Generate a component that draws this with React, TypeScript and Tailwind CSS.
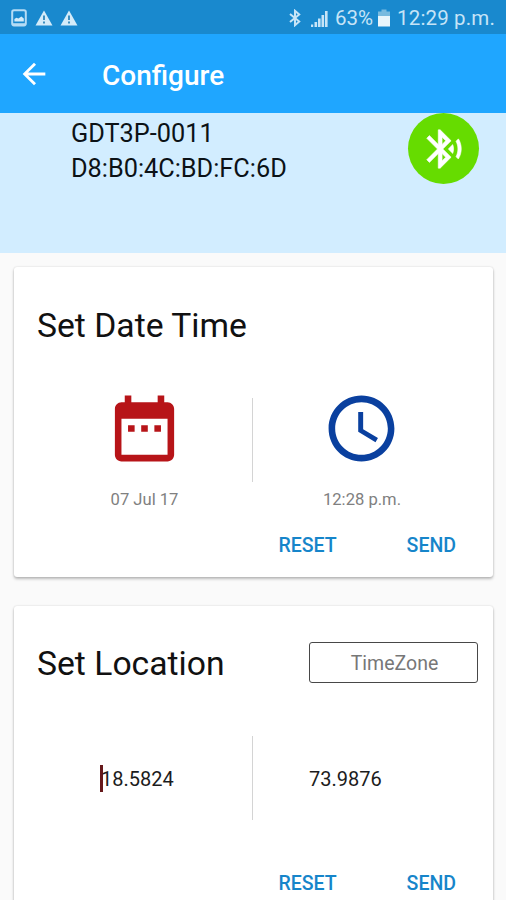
import * as React from "react"

interface CardActionsProps {
  className?: string
}

function WarningIcon() {
  return (
    <svg viewBox="0 0 18 16" className="w-[18px] h-4 shrink-0">
      <path d="M9 0.5 17.5 15.5H0.5z" fill="#d3ebf9" />
      <path d="M8 5.5h2v4.6H8zM8 11.4h2v2H8z" fill="#3c8fc0" />
    </svg>
  )
}

function StatusBar() {
  return (
    <div className="flex items-center h-[34px] bg-[#1989ce] pl-[11px] pr-[11px] text-[#c6e4f7]">
      <svg viewBox="0 0 16 18" className="w-4 h-[18px] mt-px shrink-0">
        <rect x="1.2" y="1.2" width="13.6" height="15.2" rx="1.8" fill="none" stroke="#b5dcf5" strokeWidth="2" />
        <path d="M3.4 12.5V10l2-1.2 2 .8 3-2 2.4 2v2.9z" fill="#d3ebf9" />
        <path d="M2 14.2h12v2H2z" fill="#b5dcf5" />
      </svg>
      <div className="flex gap-[7px] ml-2 mt-px">
        <WarningIcon />
        <WarningIcon />
      </div>
      <div className="flex items-center ml-auto">
        <svg viewBox="0 0 12 18" className="w-3 h-[18px] mt-px shrink-0">
          <path d="M1 5l9.2 7.6L6 16.2V1.8l4.2 3.6L1 13" fill="none" stroke="currentColor" strokeWidth="2" />
        </svg>
        <svg viewBox="0 0 17 17" className="w-[17px] h-[17px] ml-[10px] mt-[2px] shrink-0" fill="currentColor">
          <path d="M0 14.5h2.2V17H0zM3.5 12h2.6v5H3.5zM7 8.5h2.6V17H7zM10.5 5h2.6v12h-2.6zM14 1h2.6v16H14z" />
        </svg>
        <span className="ml-[7px] mt-px w-[39px] text-[20.500px] leading-6 whitespace-nowrap">63%</span>
        <svg viewBox="0 0 12 18" className="w-3 h-[18px] ml-[4px] mt-px shrink-0">
          <path d="M3.5 0.5h5v2H12V8H0V2.500h3.500z" fill="#78badf" />
          <path d="M0 7h12v10.500H0z" fill="#e8f5fc" />
        </svg>
        <span className="ml-[7px] mt-px text-[20.5px] leading-6 whitespace-nowrap tracking-[0.150px]">12:29 p.m.</span>
      </div>
    </div>
  )
}

function AppBar() {
  return (
    <header className="flex items-center h-[79px] bg-[#1fa6ff] text-white">
      <button className="ml-[17px]" aria-label="Back">
        <svg viewBox="0 0 24 24" className="w-[34px] h-[34px]" fill="currentColor">
          <path d="M20 11H7.830l5.590-5.590L12 4l-8 8 8 8 1.410-1.410L7.830 13H20v-2z" />
        </svg>
      </button>
      <h1 className="ml-[51px] mt-[4px] text-[28px] leading-8 font-medium">Configure</h1>
    </header>
  )
}

function DeviceInfo() {
  return (
    <section className="flex justify-between h-[140px] bg-[#d2edff] pl-[71px] pr-[27px]">
      <div className="pt-[4px] text-[25.3px] leading-[34.500px] text-[#0c1216]">
        <p>GDT3P-0011</p>
        <p>D8:B0:4C:BD:FC:6D</p>
      </div>
      <div className="flex items-center justify-center w-[71px] h-[71px] rounded-full bg-[#66dc00]">
        <svg viewBox="0 0 24 24" className="w-[46px] h-[46px] mt-px" fill="#fff" stroke="#fff" strokeWidth="0.3">
          <path d="M14.240 12.010l2.320 2.320c.28-.72.44-1.510.44-2.330 0-.82-.16-1.590-.43-2.310l-2.330 2.320zm5.290-5.300l-1.260 1.260c.63 1.210.98 2.570.98 4.020s-.36 2.820-.98 4.020l1.200 1.200c.97-1.540 1.540-3.360 1.540-5.310-.01-1.890-.55-3.670-1.480-5.190zm-3.820 1L10 2H9v7.590L4.410 5 3 6.410 8.590 12 3 17.590 4.410 19 9 14.410V22h1l5.710-5.710-4.300-4.290 4.300-4.290zM11 5.830l1.880 1.880L11 9.590V5.830zm1.880 10.460L11 18.170v-3.760l1.880 1.880z" />
        </svg>
      </div>
    </section>
  )
}

function CardActions({ className = "" }: CardActionsProps) {
  return (
    <div className={`flex justify-end gap-[70px] pr-[37px] text-[19.500px] leading-6 font-medium text-[#1685ca] ${className}`}>
      <button>RESET</button>
      <button>SEND</button>
    </div>
  )
}

function Divider() {
  return <div className="w-px h-[84px] bg-[#d4d4d4] shrink-0" />
}

function DateTimeCard() {
  return (
    <section className="h-[310px] rounded-[3px] bg-white shadow-[0_2px_3px_rgba(0,0,0,0.25),0_0_2px_rgba(0,0,0,0.15)] pt-[39px]">
      <h2 className="pl-[23px] text-[33.700px] leading-10 text-[#111]">Set Date Time</h2>
      <div className="flex pl-[23px] mt-[43px] h-[122px] text-[16.600px] leading-5 text-[#808080]">
        <div className="flex flex-col items-center w-[215px]">
          <svg viewBox="0 0 24 24" className="w-[79px] h-[79px]" fill="#b71418">
            <path d="M9 11H7v2h2v-2zm4 0h-2v2h2v-2zm4 0h-2v2h2v-2zm2-7h-1V2h-2v2H8V2H6v2H5c-1.110 0-1.990.9-1.990 2L3 20c0 1.100.89 2 2 2h14c1.100 0 2-.9 2-2V6c0-1.100-.9-2-2-2zm0 16H5V9h14v11z" />
          </svg>
          <p className="mt-[22px]">07 Jul 17</p>
        </div>
        <div className="mt-[9px]">
          <Divider />
        </div>
        <div className="flex flex-col items-center w-[217px]">
          <svg viewBox="0 0 24 24" className="w-[79px] h-[79px]" fill="#0a409f">
            <path d="M11.990 2C6.470 2 2 6.480 2 12s4.470 10 9.990 10C17.520 22 22 17.520 22 12S17.520 2 11.990 2zM12 20c-4.420 0-8-3.580-8-8s3.580-8 8-8 8 3.580 8 8-3.580 8-8 8z" />
            <path d="M12.500 7H11v6l5.250 3.150.75-1.230-4.500-2.670z" />
          </svg>
          <p className="mt-[22px] pl-px">12:28 p.m.</p>
        </div>
      </div>
      <CardActions className="mt-[23px]" />
    </section>
  )
}

function LocationCard() {
  return (
    <section className="h-[320px] rounded-[3px] bg-white shadow-[0_2px_3px_rgba(0,0,0,0.25),0_0_2px_rgba(0,0,0,0.15)] pt-[36px]">
      <div className="flex items-start justify-between h-[43px] pl-[23px] pr-[15px]">
        <h2 className="mt-[2px] text-[33.700px] leading-10 text-[#111]">Set Location</h2>
        <button className="w-[169px] h-[41px] rounded-[3px] border-[1.500px] border-[#484848] pt-[2px] pl-[2px] text-[19.500px] leading-6 text-[#777]">
          TimeZone
        </button>
      </div>
      <div className="flex items-center pl-[23px] mt-[51px] text-[20px] leading-6 text-[#1c1c1c]">
        <div className="flex items-center w-[215px] pl-[63px]">
          <span className="w-[3px] h-[27px] bg-[#66191b]" />
          <span className="-ml-[2px] mt-[2px]">18.5824</span>
        </div>
        <Divider />
        <span className="ml-14 mt-[2px]">73.9876</span>
      </div>
      <CardActions className="mt-[52px]" />
    </section>
  )
}

export default function App() {
  return (
    <div className="w-[506px] h-[900px] overflow-hidden bg-[#fafafa] font-[Roboto,sans-serif]">
      <StatusBar />
      <AppBar />
      <DeviceInfo />
      <main className="flex flex-col gap-[29px] pt-[14px] pl-[14px] pr-[13px]">
        <DateTimeCard />
        <LocationCard />
      </main>
    </div>
  )
}
